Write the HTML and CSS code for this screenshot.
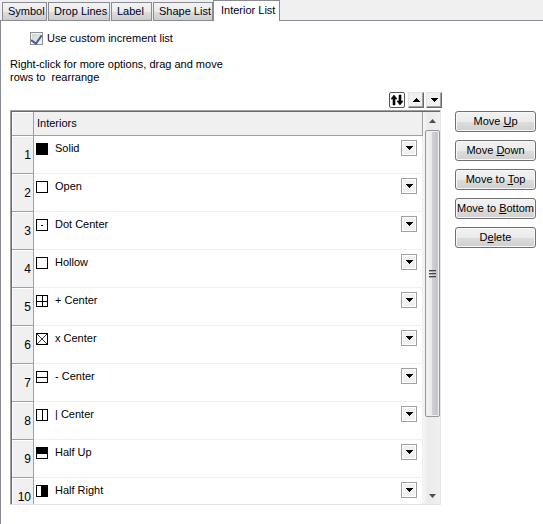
FILE: index.html
```
<!DOCTYPE html>
<html lang="en">
<head>
    <meta charset="UTF-8">
    <meta name="viewport" content="width=device-width, initial-scale=1.0">
    <title>Increment Lists</title>
    <link rel="stylesheet" href="styles.css">
</head>
<body>
    <div class="tabs" role="tablist">
        <button class="tab symbol" role="tab">Symbol</button>
        <button class="tab drop-lines" role="tab">Drop Lines</button>
        <button class="tab label" role="tab">Label</button>
        <button class="tab shape-list" role="tab">Shape List</button>
        <button class="tab active" role="tab" aria-selected="true">Interior List</button>
        <div class="tab-line"></div>
    </div>

    <div class="panel">
        <div class="option">
            <input type="checkbox" id="custom" checked>
            <label for="custom">Use custom increment list</label>
        </div>
        <p class="hint">Right-click for more options, drag and move<br>rows to &nbsp;rearrange</p>

        <div class="content">
            <div class="list">
                <div class="tools">
                    <button class="tool swap" aria-label="Reverse order">
                        <svg width="14" height="14" viewBox="0 0 14 14"><path d="M4 2L7 6H5V12H3V6H1Z M9 2H11V8H13L10 12L7 8H9Z" stroke="#000" stroke-width="0.6"/></svg>
                    </button>
                    <button class="tool" aria-label="Sort ascending">
                        <svg width="7" height="4" viewBox="0 0 7 4" shape-rendering="crispEdges"><path d="M3 0H4V1H5V2H6V3H7V4H0V3H1V2H2V1H3Z"/></svg>
                    </button>
                    <button class="tool" aria-label="Sort descending">
                        <svg width="7" height="4" viewBox="0 0 7 4" shape-rendering="crispEdges"><path d="M0 0H7V1H6V2H5V3H4V4H3V3H2V2H1V1H0Z"/></svg>
                    </button>
                </div>
                <div class="frame">
                    <table>
                        <thead>
                            <tr><th class="num"></th><th>Interiors</th></tr>
                        </thead>
                        <tbody id="rows"></tbody>
                    </table>
                    <div class="scrollbar">
                        <svg class="arrow" width="7" height="4" viewBox="0 0 7 4"><path d="M0 4L3.500 0L7 4Z" fill="#505050"/></svg>
                        <div class="thumb"><i></i><i></i><i></i></div>
                        <svg class="arrow" width="7" height="4" viewBox="0 0 7 4"><path d="M0 0L3.500 4L7 0Z" fill="#505050"/></svg>
                    </div>
                </div>
            </div>
            <div class="actions">
                <button>Move <u>U</u>p</button>
                <button>Move <u>D</u>own</button>
                <button>Move to <u>T</u>op</button>
                <button>Move to <u>B</u>ottom</button>
                <button>D<u>e</u>lete</button>
            </div>
        </div>
    </div>

    <script src="script.js"></script>
</body>
</html>
```
FILE: styles.css
```
* {
    box-sizing: border-box;
}
body {
    margin: 0;
    min-height: 100vh;
    display: flex;
    flex-direction: column;
    background-color: #fff;
    color: #000;
    font-family: "Liberation Sans", Arial, sans-serif;
    font-size: 11px;
    line-height: 13px;
}
button {
    margin: 0;
    padding: 0;
    font: inherit;
    color: #000;
    white-space: nowrap;
}
svg {
    display: block;
}
.tabs {
    display: flex;
    align-items: flex-end;
    height: 21px;
    background-color: #f0f0f0;
}
.tabs::before {
    content: "";
    width: 2px;
    height: 1px;
    background-color: #898c95;
}
.tab {
    height: 19px;
    padding: 0 5px;
    border: 1px solid #898c95;
    margin-right: 1px;
    background: linear-gradient(#f3f3f3, #ebebeb 50%, #dddddd 51%, #cdcdcd);
    color: #000020;
    text-align: left;
}
.symbol {
    width: 45px;
}
.drop-lines {
    width: 62px;
}
.label {
    width: 41px;
}
.shape-list {
    width: 60px;
    margin-right: 0;
}
.tab.active {
    width: 67px;
    height: 21px;
    padding: 0 7px 2px;
    border-bottom: 0;
    margin: 0;
    background: #fff;
}
.tab-line {
    flex: 1;
    height: 1px;
    background-color: #898c95;
}
.panel {
    flex: 1;
    padding: 10px 7px 19px 9px;
    border-left: 1px solid #898c95;
}
.option {
    display: flex;
    align-items: center;
    gap: 4px;
    height: 14px;
    margin-left: 20px;
    color: #000020;
}
.option input {
    display: flex;
    justify-content: center;
    align-items: flex-start;
    appearance: none;
    width: 13px;
    height: 13px;
    margin: 0;
    border: 1px solid #8e8f8f;
    background: linear-gradient(135deg, #cbcfd5, #f6f6f6);
    box-shadow: inset 0 0 0 1px #f4f4f4;
}
.option input:checked::after {
    content: "";
    width: 5px;
    height: 9px;
    border: solid #4b5f97;
    border-width: 0 2px 2px 0;
    transform: rotate(35deg);
}
.hint {
    margin: 13px 0 8px;
}
.content {
    display: flex;
    gap: 14px;
}
.list {
    flex: 1;
}
.tools {
    display: flex;
    justify-content: flex-end;
    gap: 2px;
    margin: 0 -1px 2px 0;
}
.tool {
    display: flex;
    align-items: center;
    justify-content: center;
    width: 16px;
    height: 16px;
    border: 1px solid;
    border-color: #e3e3e3 #696969 #696969 #e3e3e3;
    background-color: #f0f0f0;
    box-shadow: inset -1px -1px #a0a0a0;
}
.swap {
    margin-right: 1px;
    border: 1px solid #555;
    border-radius: 2px;
    background-color: #fff;
    box-shadow: none;
}
.frame {
    display: flex;
    border: 1px solid;
    border-color: #a0a0a0 #e3e3e3 #e3e3e3 #a0a0a0;
    box-shadow: inset 1px 1px #696969;
    padding: 1px 0 0 1px;
}
table {
    flex: 1;
    border-spacing: 0;
    table-layout: fixed;
}
th {
    height: 24px;
    padding: 0 0 0 3px;
    border-right: 1px solid #a0a0a0;
    border-bottom: 1px solid #a0a0a0;
    background-color: #f0f0f0;
    color: #000020;
    font-weight: normal;
    text-align: left;
}
td {
    height: 38px;
    padding: 4px 5px 0 2px;
    border-right: 1px solid #f0f0f0;
    border-bottom: 1px solid #f0f0f0;
    vertical-align: top;
}
.num {
    width: 22px;
    border-right: 1px solid #a0a0a0;
    border-bottom: 1px solid #a0a0a0;
    background-color: #f0f0f0;
    box-shadow: inset 1px 1px #fff;
}
td.num {
    padding: 13px 2px 0 0;
    font-size: 12px;
    text-align: right;
}
tr:last-child td {
    height: 26px;
    border-bottom: 0;
}
.interior {
    display: flex;
    gap: 7px;
}
.interior svg {
    margin-top: 3px;
}
.interior span {
    flex: 1;
    margin-top: 2px;
}
.drop {
    display: flex;
    align-items: center;
    justify-content: center;
    width: 16px;
    height: 16px;
    border: 1px solid #a0a0a0;
    background-color: #f0f0f0;
    box-shadow: inset 0 0 0 1px #fff;
}
.interior .drop svg {
    margin: 0;
}
.scrollbar {
    display: flex;
    flex-direction: column;
    align-items: center;
    width: 17px;
    padding: 7px 0 6px 1px;
    background: linear-gradient(90deg, #f6f6f6, #ebebeb 30%, #f0f0f0);
}
.thumb {
    display: flex;
    flex-direction: column;
    align-items: center;
    justify-content: center;
    gap: 1px;
    width: 15px;
    height: 287px;
    margin: 7px 0 auto;
    border: 1px solid #979797;
    border-radius: 2px;
    background: linear-gradient(90deg, #f5f5f5, #e9e9eb 45%, #d0d0d6 50%, #c3c3ca 85%, #dcdce0);
    box-shadow: inset 0 0 0 1px #eee;
}
.thumb i {
    width: 7px;
    height: 2px;
    border-top: 1px solid #444;
    background-color: #aaa;
}
.actions {
    display: flex;
    flex-direction: column;
    gap: 8px;
    width: 81px;
    padding-top: 19px;
}
.actions button {
    height: 21px;
    border: 1px solid #707070;
    border-radius: 3px;
    background: linear-gradient(#f2f2f2, #ebebeb 50%, #dddddd 51%, #cfcfcf);
    box-shadow: inset 0 0 0 1px #f8f8f8;
}
```
FILE: script.js
```
const square = '<rect x="0.5" y="0.5" width="11" height="11" fill="#fff" stroke="#000"/>';

const interiors = [
    ['Solid', '<rect width="12" height="12"/>'],
    ['Open', square],
    ['Dot Center', square + '<path d="M5 6.5H7" stroke="#000"/>'],
    ['Hollow', square],
    ['+ Center', square + '<path d="M6.5 0V12M0 6.5H12" stroke="#000"/>'],
    ['x Center', square + '<path d="M1 1L11 11M11 1L1 11" stroke="#000" stroke-width="0.8"/>'],
    ['- Center', square + '<path d="M0 6.5H12" stroke="#000"/>'],
    ['| Center', square + '<path d="M6.5 0V12" stroke="#000"/>'],
    ['Half Up', square + '<rect width="12" height="7"/>'],
    ['Half Right', square + '<rect x="5" width="7" height="12"/>']
];

document.getElementById('rows').innerHTML = interiors.map(([name, shape], i) => `
    <tr>
        <td class="num">${i + 1}</td>
        <td>
            <div class="interior">
                <svg width="12" height="12" viewBox="0 0 12 12">${shape}</svg>
                <span>${name}</span>
                <button class="drop" aria-label="Choose interior for row ${i + 1}">
                    <svg width="7" height="4" viewBox="0 0 7 4" shape-rendering="crispEdges"><path d="M0 0H7V1H6V2H5V3H4V4H3V3H2V2H1V1H0Z"/></svg>
                </button>
            </div>
        </td>
    </tr>`).join('');
```
